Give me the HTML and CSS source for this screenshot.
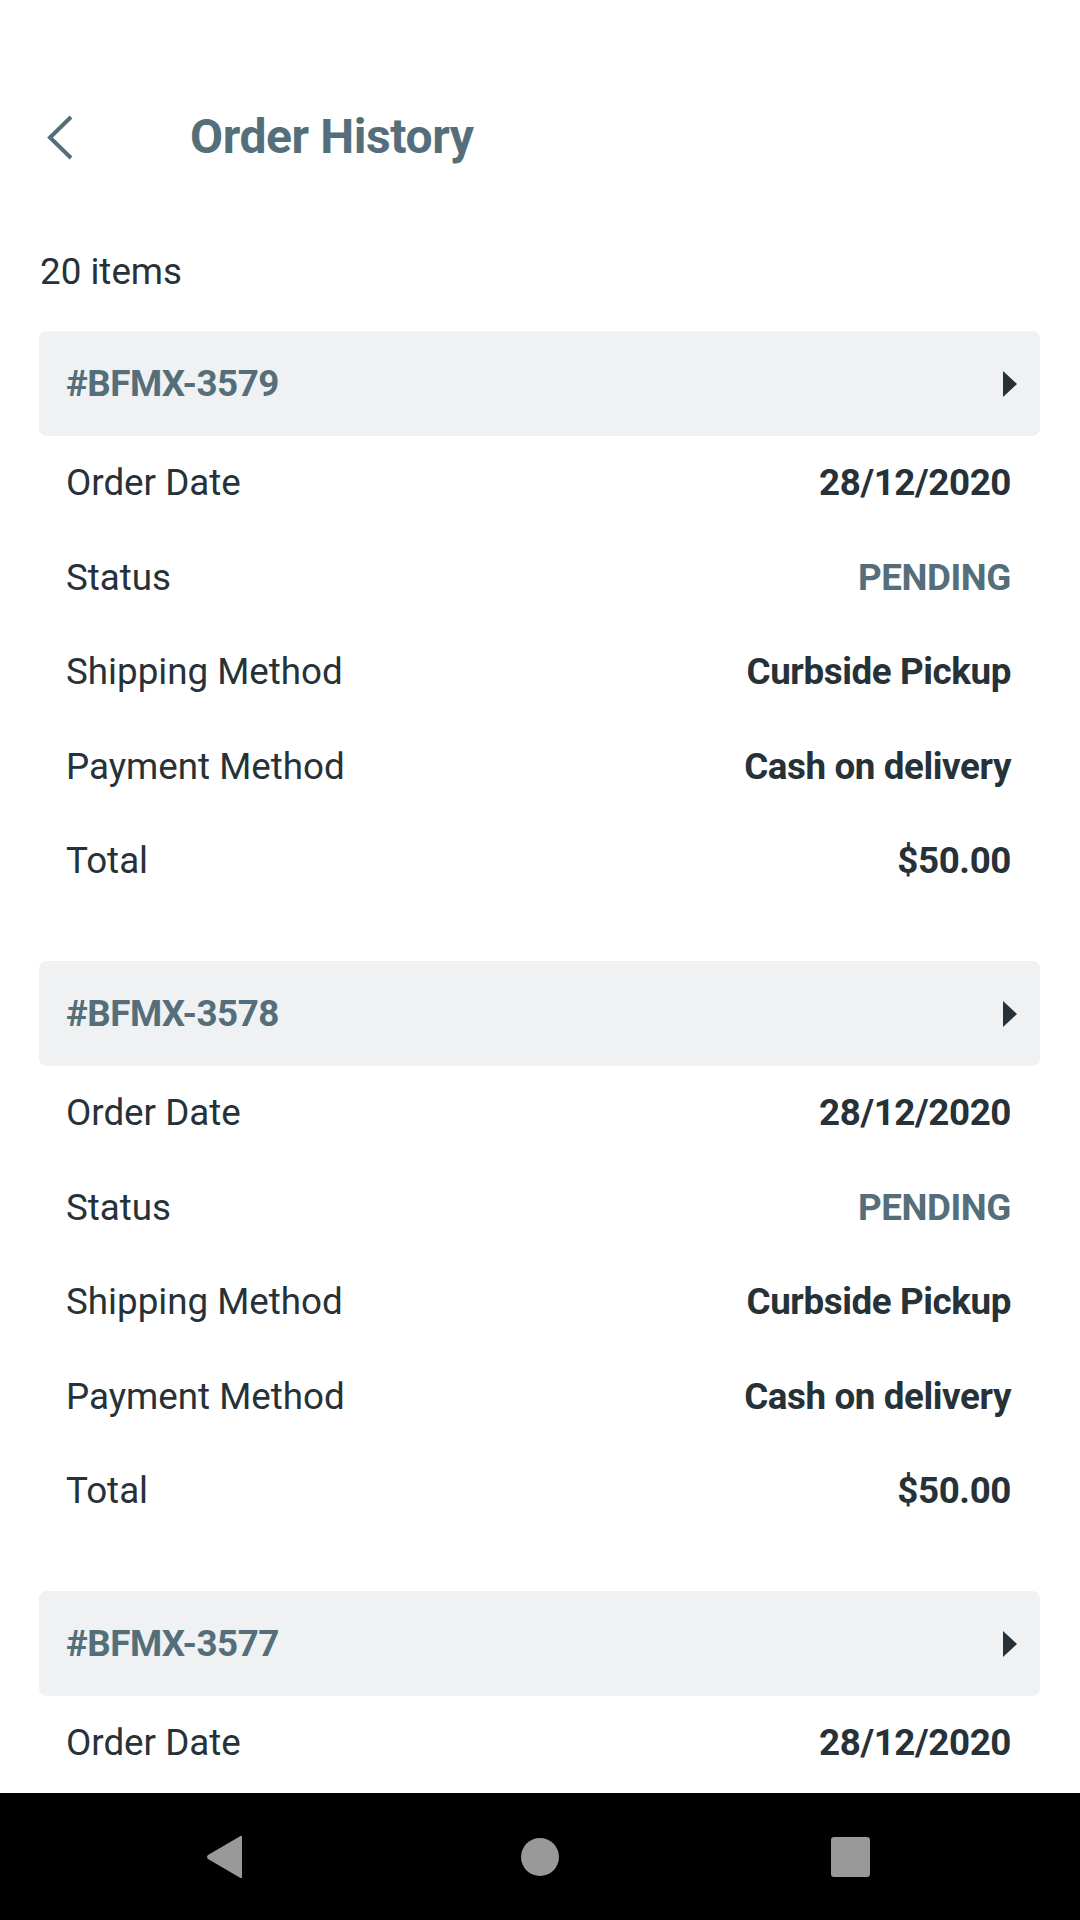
FILE: index.html
```html
<!DOCTYPE html>
<html lang="en">
<head>
<meta charset="utf-8">
<title>Order History</title>
<link rel="stylesheet" href="styles.css">
</head>
<body>
<div class="screen">
  <div class="statusbar"></div>
  <div class="toolbar">
    <div class="back">
      <svg width="40" height="56" viewBox="0 0 40 56"><polyline points="31,8 10,28.5 31,49" fill="none" stroke="#546E7A" stroke-width="4"/></svg>
    </div>
    <div class="title">Order History</div>
  </div>
  <div class="content">
    <div class="count">20 items</div>

    <div class="card">
      <div class="card-head"><span class="oid">#BFMX-3579</span><span class="tri"></span></div>
      <div class="row"><span class="lbl">Order Date</span><span class="val">28/12/2020</span></div>
      <div class="row"><span class="lbl">Status</span><span class="val status">PENDING</span></div>
      <div class="row"><span class="lbl">Shipping Method</span><span class="val">Curbside Pickup</span></div>
      <div class="row"><span class="lbl">Payment Method</span><span class="val">Cash on delivery</span></div>
      <div class="row"><span class="lbl">Total</span><span class="val">$50.00</span></div>
    </div>

    <div class="card">
      <div class="card-head"><span class="oid">#BFMX-3578</span><span class="tri"></span></div>
      <div class="row"><span class="lbl">Order Date</span><span class="val">28/12/2020</span></div>
      <div class="row"><span class="lbl">Status</span><span class="val status">PENDING</span></div>
      <div class="row"><span class="lbl">Shipping Method</span><span class="val">Curbside Pickup</span></div>
      <div class="row"><span class="lbl">Payment Method</span><span class="val">Cash on delivery</span></div>
      <div class="row"><span class="lbl">Total</span><span class="val">$50.00</span></div>
    </div>

    <div class="card">
      <div class="card-head"><span class="oid">#BFMX-3577</span><span class="tri"></span></div>
      <div class="row"><span class="lbl">Order Date</span><span class="val">28/12/2020</span></div>
      <div class="row"><span class="lbl">Status</span><span class="val status">PENDING</span></div>
      <div class="row"><span class="lbl">Shipping Method</span><span class="val">Curbside Pickup</span></div>
      <div class="row"><span class="lbl">Payment Method</span><span class="val">Cash on delivery</span></div>
      <div class="row"><span class="lbl">Total</span><span class="val">$50.00</span></div>
    </div>
  </div>
  <div class="navbar">
    <svg class="nav-back" width="38" height="44" viewBox="0 0 38 44"><path d="M36 1 L36 43 L34.5 43 L2 24 Q0 22 2 20 L34.5 1 Z" fill="#999999"/></svg>
    <span class="nav-home"></span>
    <span class="nav-recent"></span>
  </div>
</div>
</body>
</html>
```

FILE: styles.css
```css
html, body {
  margin: 0;
  padding: 0;
  background: #ffffff;
}
body {
  font-family: Roboto, "Liberation Sans", sans-serif;
  color: #263238;
}
.screen {
  width: 1080px;
  height: 1920px;
  display: flex;
  flex-direction: column;
  overflow: hidden;
}
.statusbar {
  height: 63px;
  flex: none;
}
.toolbar {
  height: 147px;
  flex: none;
  display: flex;
  align-items: center;
}
.back {
  width: 40px;
  height: 56px;
  margin-left: 40px;
  display: flex;
}
.title {
  margin-left: 110px;
  font-size: 48px;
  font-weight: 700;
  letter-spacing: -0.4px;
  color: #546E7A;
  line-height: 56px;
}
.content {
  flex: 1;
  overflow: hidden;
  padding: 41px 40px 0 39px;
}
.count {
  font-size: 36.75px;
  line-height: 42px;
  margin-left: 1px;
  margin-bottom: 38px;
}
.card {
  margin-bottom: 52.5px;
}
.card-head {
  height: 105px;
  background: #eff1f3;
  border-radius: 8px;
  display: flex;
  align-items: center;
  justify-content: space-between;
  padding: 0 23px 0 27px;
}
.oid {
  font-size: 36.75px;
  font-weight: 700;
  letter-spacing: -0.5px;
  color: #546E7A;
  line-height: 105px;
}
.tri {
  width: 0;
  height: 0;
  border-top: 13px solid transparent;
  border-bottom: 13px solid transparent;
  border-left: 14px solid #263238;
}
.row {
  height: 94.5px;
  display: flex;
  align-items: center;
  justify-content: space-between;
  padding: 0 29px 0 27px;
  font-size: 36.75px;
  line-height: 94.5px;
}
.val {
  font-weight: 700;
  letter-spacing: -0.4px;
}
.status {
  color: #546E7A;
}
.navbar {
  height: 127px;
  flex: none;
  background: #000000;
  display: flex;
  align-items: center;
}
.nav-back {
  margin-left: 206px;
}
.nav-home {
  width: 38px;
  height: 38px;
  border-radius: 50%;
  background: #999999;
  margin-left: 277px;
}
.nav-recent {
  width: 39px;
  height: 40px;
  border-radius: 3px;
  background: #999999;
  margin-left: 272px;
}
```
